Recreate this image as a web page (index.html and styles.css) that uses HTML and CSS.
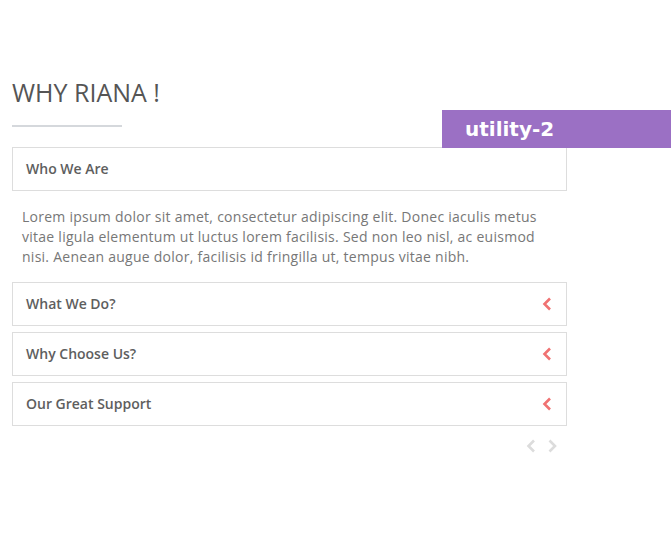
FILE: index.html
```html
<!DOCTYPE html>
<html lang="en">
<head>
<meta charset="utf-8">
<title>Why Riana</title>
<link rel="stylesheet" href="styles.css">
</head>
<body>
<div class="badge">utility-2</div>
<section class="why">
  <h2 class="why-title">WHY RIANA !</h2>
  <div class="why-rule"></div>
  <div class="accordion">
    <div class="panel panel-open">
      <div class="panel-head"><span class="panel-title">Who We Are</span></div>
    </div>
    <p class="panel-body">Lorem ipsum dolor sit amet, consectetur adipiscing elit. Donec iaculis metus vitae ligula elementum ut luctus lorem facilisis. Sed non leo nisl, ac euismod nisi. Aenean augue dolor, facilisis id fringilla ut, tempus vitae nibh.</p>
    <div class="panel">
      <div class="panel-head"><span class="panel-title">What We Do?</span>
        <svg class="chev" width="10" height="14" viewBox="0 0 10 14"><polyline points="8,1.5 2.5,7 8,12.5" fill="none" stroke="#f07272" stroke-width="2.6"/></svg>
      </div>
    </div>
    <div class="panel">
      <div class="panel-head"><span class="panel-title">Why Choose Us?</span>
        <svg class="chev" width="10" height="14" viewBox="0 0 10 14"><polyline points="8,1.5 2.5,7 8,12.5" fill="none" stroke="#f07272" stroke-width="2.6"/></svg>
      </div>
    </div>
    <div class="panel">
      <div class="panel-head"><span class="panel-title">Our Great Support</span>
        <svg class="chev" width="10" height="14" viewBox="0 0 10 14"><polyline points="8,1.5 2.5,7 8,12.5" fill="none" stroke="#f07272" stroke-width="2.6"/></svg>
      </div>
    </div>
  </div>
  <div class="nav">
    <svg width="10" height="14" viewBox="0 0 10 14"><polyline points="8,1.5 2.5,7 8,12.5" fill="none" stroke="#dcdcdc" stroke-width="2.6"/></svg>
    <svg width="10" height="14" viewBox="0 0 10 14"><polyline points="2.5,1.5 8,7 2.5,12.5" fill="none" stroke="#dcdcdc" stroke-width="2.6"/></svg>
  </div>
</section>
</body>
</html>
```

FILE: styles.css
```css
html, body {
  margin: 0;
  padding: 0;
  background: #ffffff;
}
body {
  font-family: "Open Sans", "Liberation Sans", sans-serif;
  color: #555555;
  position: relative;
  width: 671px;
  height: 533px;
}
.badge {
  position: absolute;
  top: 110px;
  left: 442px;
  width: 229px;
  height: 38px;
  box-sizing: border-box;
  padding-left: 23px;
  background: #9b70c4;
  color: #ffffff;
  font-family: "DejaVu Sans", sans-serif;
  font-weight: 700;
  font-size: 20px;
  line-height: 38px;
}
.why {
  padding: 77px 0 0 12px;
  width: 555px;
}
.why-title {
  margin: 0;
  font-size: 25px;
  line-height: 30px;
  font-weight: 400;
  color: #555555;
}
.why-rule {
  margin-top: 18px;
  width: 110px;
  height: 2px;
  background: #d5d8dc;
}
.accordion {
  margin-top: 20px;
  display: flex;
  flex-direction: column;
}
.panel {
  border: 1px solid #dddddd;
  margin-bottom: 6px;
}
.panel-open {
  margin-bottom: 0;
}
.panel-head {
  display: flex;
  align-items: center;
  justify-content: space-between;
  height: 42px;
  box-sizing: border-box;
  padding: 0 14px 1px 13px;
}
.panel-title {
  font-size: 14px;
  font-weight: 600;
  line-height: 20px;
  color: #5e5e5e;
}
.chev {
  display: block;
  margin-top: 1px;
}
.panel-body {
  margin: 0;
  padding: 16px 10px 15px 10px;
  font-size: 14px;
  letter-spacing: 0.26px;
  line-height: 20px;
  color: #777777;
}
.nav {
  display: flex;
  justify-content: flex-end;
  gap: 11px;
  padding: 7px 10px 0 0;
}
.nav svg {
  display: block;
}
```
